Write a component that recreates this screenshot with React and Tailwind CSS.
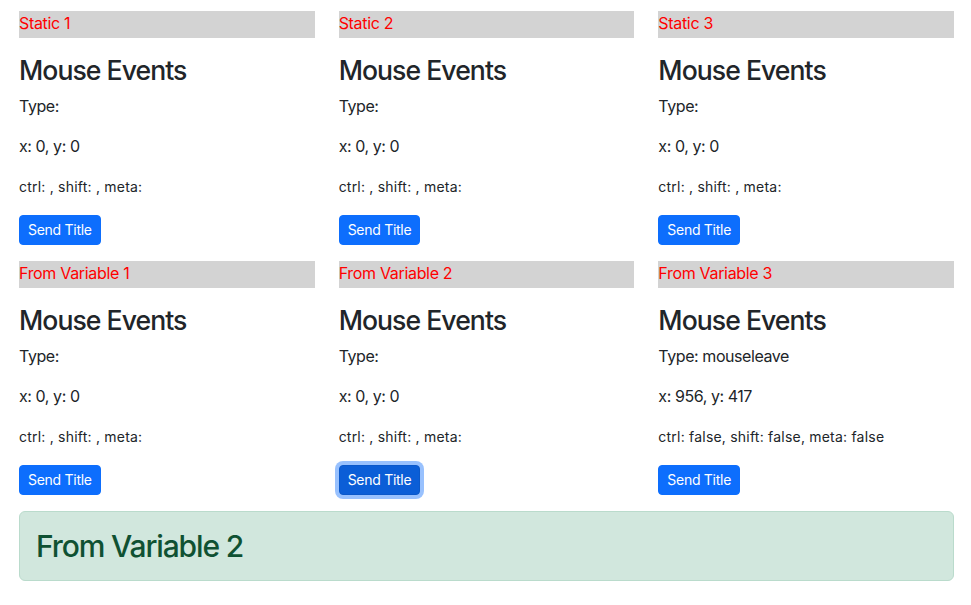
import React from 'react';

const cards = [
  { label: 'Static 1' },
  { label: 'Static 2' },
  { label: 'Static 3' },
  { label: 'From Variable 1' },
  { label: 'From Variable 2', focused: true },
  { label: 'From Variable 3', type: 'mouseleave', x: 956, y: 417, mods: 'false' },
];

const MouseCard = ({ label, type = '', x = 0, y = 0, mods = '', focused }) => (
  <div className="pb-4">
    <div className="h-[27px] bg-[#d3d3d3] text-[#ff0000] text-base leading-6 mb-4 tracking-[-0.02em]">{label}</div>
    <h3 className="text-[26.6px] leading-[32px] font-medium mb-2 tracking-[-0.036em]">Mouse Events</h3>
    <p className="leading-6 mb-4 tracking-[-0.027em]">Type: {type}</p>
    <p className="leading-6 mb-4 tracking-[-0.027em]">x: {x}, y: {y}</p>
    <p className="leading-6 mb-4">
      <small className="text-[14px] tracking-[0.015em]">ctrl: {mods}, shift: {mods}, meta: {mods}</small>
    </p>
    <button
      className={`h-[30px] px-2 text-[14px] leading-[20px] rounded-[4px] border text-white tracking-[-0.02em] ${
        focused
          ? 'bg-[#0b5ed7] border-[#0a58ca] shadow-[0_0_0_4px_rgba(49,132,253,0.5)]'
          : 'bg-[#0d6efd] border-[#0d6efd]'
      }`}
    >
      Send Title
    </button>
  </div>
);

export default function App() {
  return (
    <div className="min-h-screen bg-white text-[#212529] font-['Inter',sans-serif] text-base">
      <div className="w-[935px] ml-[19px] pt-[11px]">
        <div className="grid grid-cols-3 gap-x-6">
          {cards.map((c) => (
            <MouseCard key={c.label} {...c} />
          ))}
        </div>
        <div className="bg-[#d1e7dd] border border-[#badbcc] rounded-[6px] p-4 text-[#0f5132]">
          <h2 className="text-[30px] leading-[36px] font-medium tracking-[-0.038em]">From Variable 2</h2>
        </div>
      </div>
    </div>
  );
}
